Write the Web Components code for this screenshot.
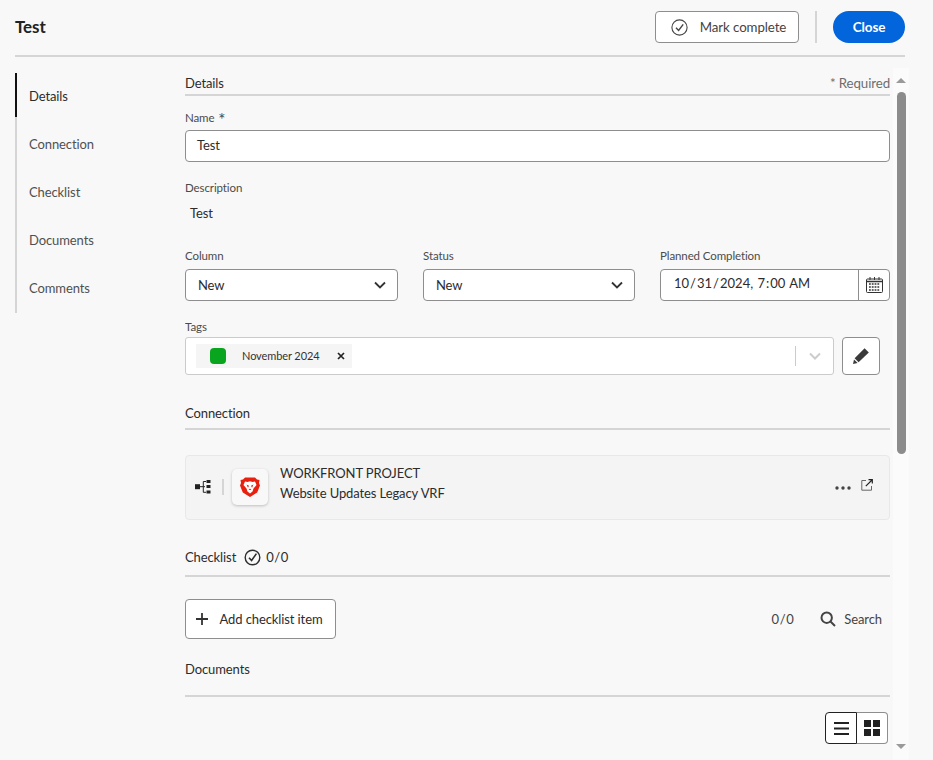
<!DOCTYPE html>
<html lang="en">
<head>
<meta charset="utf-8">
<title>Test</title>
<style>
    html, body { margin: 0; height: 760px; overflow: hidden; background: #f8f8f8; }
    body { font: 13px/16px Lato, "Noto Sans", sans-serif; letter-spacing: -.1px; color: #2c2c2c; }
</style>
</head>
<body>
<wf-panel>
    <wf-header slot="header" title="Test"></wf-header>
    <wf-sidenav slot="nav" active="Details" items="Details,Connection,Checklist,Documents,Comments"></wf-sidenav>

    <wf-section style="height:21px">
        <span>Details</span>
        <span slot="end" style="color:#6e6e6e;font-size:13.3px">* Required</span>
    </wf-section>
    <wf-field label="Name" required style="margin-top:15px">
        <wf-input value="Test"></wf-input>
    </wf-field>
    <wf-field label="Description" style="margin-top:19px">
        <div style="padding:1px 5px 0;height:24px;line-height:24px;box-sizing:content-box">Test</div>
    </wf-field>
    <wf-row style="margin-top:24px;--label-gap:6px">
        <wf-field label="Column"><wf-select value="New"></wf-select></wf-field>
        <wf-field label="Status"><wf-select value="New"></wf-select></wf-field>
        <wf-field label="Planned Completion"><wf-date value="10 / 31 / 2024,&#8197; 7 : 00&#8197; AM"></wf-date></wf-field>
    </wf-row>
    <wf-field label="Tags" style="margin-top:19px;--label-gap:3px">
        <wf-tags tag="November 2024"></wf-tags>
    </wf-field>
    <wf-section style="margin-top:30px;height:25px">
        <span>Connection</span>
    </wf-section>
    <wf-connection style="margin-top:25px" kind="WORKFRONT PROJECT" name="Website Updates Legacy VRF"></wf-connection>
    <wf-section style="margin-top:19px;height:38px">
        <span style="display:inline-flex;align-items:center;gap:8px">Checklist
            <svg width="17" height="17" viewBox="0 0 17 17" fill="none" stroke="#2c2c2c" stroke-width="1.4"><circle cx="8.5" cy="8.5" r="7.3"/><path d="M5 8.7l2.6 2.8L12.4 4.6" stroke-width="1.6"/></svg>
            <span style="margin-left:-3px;letter-spacing:.6px">0/0</span></span>
    </wf-section>
    <wf-toolbar style="margin-top:22px"></wf-toolbar>
    <wf-section style="margin-top:22px;height:36px">
        <span>Documents</span>
    </wf-section>
    <wf-viewtoggle style="margin-top:15px"></wf-viewtoggle>

    <wf-scrollbar slot="scroll"></wf-scrollbar>
</wf-panel>

<script>
// shared button box used by the small outlined buttons
const outlined = `
    display: inline-flex;
    align-items: center;
    justify-content: center;
    box-sizing: border-box;
    border: 1px solid #8e8e8e;
    border-radius: 4px;
    background: #fff;
`;

class WfPanel extends HTMLElement {
    constructor() {
        super();
        this.attachShadow({mode: 'open'}).innerHTML = `
            <style>
                :host { display: block; height: 760px; }
                .main { display: flex; padding-left: 15px; }
                .nav { width: 170px; flex: none; padding-top: 16px; }
                .content { width: 705px; flex: none; padding-top: 18px; box-sizing: border-box; height: 703px; overflow: hidden; }
                .scroll { margin-left: 3px; }
            </style>
            <slot name="header"></slot>
            <div class="main">
                <div class="nav"><slot name="nav"></slot></div>
                <div class="content"><slot></slot></div>
                <div class="scroll"><slot name="scroll"></slot></div>
            </div>`;
    }
}

class WfHeader extends HTMLElement {
    constructor() {
        super();
        this.attachShadow({mode: 'open'}).innerHTML = `
            <style>
                :host { display: flex; align-items: center; box-sizing: border-box; height: 57px; width: 890px; margin-left: 15px; border-bottom: 2px solid #d5d5d5; padding-bottom: 1px; }
                h1 { margin: 0; flex: 1; font-size: 17px; font-weight: 700; color: #222; }
                .mark { ${outlined} width: 144px; height: 32px; gap: 12px; color: #444; padding-left: 3px; font-size: 13.3px; }
                .sep { width: 2px; height: 32px; background: #d5d5d5; margin: 0 16px; }
                .close { display: flex; align-items: center; justify-content: center; width: 72px; height: 32px; border-radius: 16px; background: #0265dc; color: #fff; font-weight: 700; font-size: 13.5px; }
                svg { display: block; }
            </style>
            <h1></h1>
            <div class="mark">
                <svg width="17" height="17" viewBox="0 0 17 17" fill="none" stroke="#444" stroke-width="1.1"><circle cx="8.5" cy="8.5" r="7.6"/><path d="M5 8.8l2.6 2.7 4.6-6.2" stroke-width="1.4"/></svg>
                <span>Mark complete</span>
            </div>
            <div class="sep"></div>
            <div class="close">Close</div>`;
        this.shadowRoot.querySelector('h1').textContent = this.getAttribute('title');
    }
}

class WfSidenav extends HTMLElement {
    constructor() {
        super();
        const active = this.getAttribute('active');
        const items = this.getAttribute('items').split(',').map(name =>
            `<div class="item ${name === active ? 'on' : ''}">${name}</div>`).join('');
        this.attachShadow({mode: 'open'}).innerHTML = `
            <style>
                :host { display: block; }
                .item { position: relative; height: 48px; line-height: 47px; padding-left: 12px; border-left: 2px solid #d5d5d5; color: #505050; }
                .on { color: #2c2c2c; }
                .on::before { content: ''; position: absolute; left: -2px; top: 0; width: 2px; height: 44px; background: #111; }
            </style>${items}`;
    }
}

class WfSection extends HTMLElement {
    constructor() {
        super();
        this.attachShadow({mode: 'open'}).innerHTML = `
            <style>
                :host { display: flex; justify-content: space-between; box-sizing: border-box; border-bottom: 2px solid #d5d5d5; }
            </style>
            <slot></slot><slot name="end"></slot>`;
    }
}

class WfField extends HTMLElement {
    constructor() {
        super();
        this.attachShadow({mode: 'open'}).innerHTML = `
            <style>
                :host { display: block; }
                label { display: block; height: 14px; line-height: 14px; margin-bottom: var(--label-gap, 5px); font-size: 11.5px; color: #4b4b4b; }
                b { font-weight: 400; font-size: 17px; line-height: 14px; vertical-align: -4px; margin-left: 1px; }
            </style>
            <label></label><slot></slot>`;
        const label = this.shadowRoot.querySelector('label');
        label.textContent = this.getAttribute('label');
        if(this.hasAttribute('required')) {
            label.insertAdjacentHTML('beforeend', ' <b>*</b>');
        }
    }
}

class WfInput extends HTMLElement {
    constructor() {
        super();
        this.attachShadow({mode: 'open'}).innerHTML = `
            <style>
                :host { display: flex; align-items: center; box-sizing: border-box; height: 32px; padding: 0 0 2px 11px; border: 1px solid #8e8e8e; border-radius: 4px; background: #fff; }
            </style><span></span>`;
        this.shadowRoot.querySelector('span').textContent = this.getAttribute('value');
    }
}

class WfRow extends HTMLElement {
    constructor() {
        super();
        this.attachShadow({mode: 'open'}).innerHTML = `
            <style>
                :host { display: grid; grid-template-columns: 213px 212px 230px; column-gap: 25px; }
            </style><slot></slot>`;
    }
}

class WfSelect extends HTMLElement {
    constructor() {
        super();
        this.attachShadow({mode: 'open'}).innerHTML = `
            <style>
                :host { display: flex; align-items: center; justify-content: space-between; box-sizing: border-box; height: 32px; padding: 0 11px 0 12px; border: 1px solid #8e8e8e; border-radius: 4px; background: #fff; }
                svg { display: block; }
            </style>
            <span></span>
            <svg width="12" height="8" viewBox="0 0 12 8" fill="none" stroke="#333" stroke-width="1.8"><path d="M1 1.5l5 5 5-5"/></svg>`;
        this.shadowRoot.querySelector('span').textContent = this.getAttribute('value');
    }
}

class WfDate extends HTMLElement {
    constructor() {
        super();
        this.attachShadow({mode: 'open'}).innerHTML = `
            <style>
                :host { display: flex; box-sizing: border-box; height: 32px; border: 1px solid #8e8e8e; border-radius: 4px; background: #fff; }
                .val { flex: 1; line-height: 26px; padding-left: 13px; white-space: pre; color: #2c2c2c; word-spacing: -2.3px; letter-spacing: 0; }
                .cal { width: 30px; display: flex; align-items: center; justify-content: center; border-left: 1px solid #8e8e8e; }
            </style>
            <div class="val"></div>
            <div class="cal">
                <svg width="17" height="16" viewBox="0 0 17 16" fill="none" stroke="#333"><rect x=".5" y="2" width="16" height="13.5" rx="1"/><path d="M.5 4.5h16" stroke-width="1.5"/><path d="M4 0v3M8.5 0v3M13 0v3"/><path d="M3 7h11M3 10h11M3 13h11" stroke-width="1.6" stroke-dasharray="1.8 1"/></svg>
            </div>`;
        this.shadowRoot.querySelector('.val').textContent = this.getAttribute('value');
    }
}

class WfTags extends HTMLElement {
    constructor() {
        super();
        this.attachShadow({mode: 'open'}).innerHTML = `
            <style>
                :host { display: flex; gap: 8px; width: 695px; }
                .box { flex: none; width: 649px; height: 38px; box-sizing: border-box; display: flex; align-items: center; padding-left: 10px; border: 1px solid #cbcbcb; border-radius: 3px; background: #fff; }
                .tag { display: flex; align-items: center; height: 24px; width: 156px; box-sizing: border-box; padding-left: 14px; background: #f5f5f5; font-size: 11px; color: #333; }
                .dot { width: 16px; height: 16px; border-radius: 4px; background: #0aa51f; margin-right: 16px; }
                .tag span { width: 80px; white-space: nowrap; }
                .x { margin-left: 15px; display: block; }
                .spacer { flex: 1; }
                .ind { width: 37px; height: 20px; border-left: 1px solid #cbcbcb; display: flex; align-items: center; justify-content: center; }
                .edit { ${outlined} width: 38px; height: 38px; }
            </style>
            <div class="box">
                <div class="tag"><div class="dot"></div><span></span>
                    <svg class="x" width="8" height="8" viewBox="0 0 8 8" stroke="#222" stroke-width="1.7"><path d="M1 1l6 6M7 1L1 7"/></svg>
                </div>
                <div class="spacer"></div>
                <div class="ind"><svg width="12" height="8" viewBox="0 0 12 8" fill="none" stroke="#ccc" stroke-width="2"><path d="M1 1.5l5 5 5-5"/></svg></div>
            </div>
            <div class="edit">
                <svg width="16" height="16" viewBox="0 0 16 16" fill="#3a3a3a"><path d="M11.6 .2l4.200 4.200L5.600 14.200 1.600 10.200z"/><path d="M1 11.400l3.600 3.600-4.600 1z"/></svg>
            </div>`;
        this.shadowRoot.querySelector('.tag span').textContent = this.getAttribute('tag');
    }
}

class WfConnection extends HTMLElement {
    constructor() {
        super();
        this.attachShadow({mode: 'open'}).innerHTML = `
            <style>
                :host { display: flex; align-items: center; box-sizing: border-box; height: 65px; padding: 0 16px 2px 9px; border: 1px solid #e8e8e8; border-radius: 4px; background: #f4f4f4; }
                .hier { display: block; margin-right: 10px; }
                .bar { width: 2px; height: 16px; background: #d5d5d5; margin-right: 8px; }
                .logo { width: 36px; height: 36px; border-radius: 5px; background: #f8f8f8; box-shadow: 0 1px 3px rgba(0,0,0,.22); display: flex; align-items: center; justify-content: center; margin-right: 12px; }
                .txt { flex: 1; line-height: 20px; color: #2c2c2c; padding-bottom: 8px; }
                .more { display: block; margin: 2px 10px 0 0; }
                .open { display: block; margin-top: -4px; }
            </style>
            <svg class="hier" width="17" height="16" viewBox="0 0 17 16" fill="#222"><rect x="0" y="5.200" width="5" height="5"/><path d="M5 7.700h5M8.300 2.500v10.800M8.300 2.500H11M8.300 13.300H11" fill="none" stroke="#222"/><rect x="11.500" y="1" width="4" height="3"/><rect x="11.500" y="6" width="4" height="3"/><rect x="11.500" y="11.500" width="4" height="3"/></svg>
            <div class="bar"></div>
            <div class="logo">
                <svg width="20" height="20" viewBox="0 0 20 20"><path d="M5 .5h10l2 2 2.500.5-.5 3 1 2.500-2.800 7L10 20l-7.200-4.500L0 8.500 1 6 .5 3 3 2.500z" fill="#e8200e"/><path d="M5 4.500l2.500.5L10 4.200l2.500.8L15 4.500l1.500 3.500-3 3.500-1 3L10 16.500l-2.500-2-1-3-3-3.500z" fill="#fff"/><path d="M6.500 7.500l2.500 1.200-1 2zM13.500 7.500L11 8.700l1 2zM8.500 13h3L10 11.500z" fill="#e8200e"/></svg>
            </div>
            <div class="txt"><div></div><div></div></div>
            <svg class="more" width="16" height="4" viewBox="0 0 16 4" fill="#444"><circle cx="2" cy="2" r="1.700"/><circle cx="8" cy="2" r="1.700"/><circle cx="14" cy="2" r="1.700"/></svg>
            <svg class="open" width="12" height="12" viewBox="0 0 12 12" fill="none" stroke="#666"><path d="M5 1.500H.8v9.700h9.700V7"/><path d="M4.800 7.200L11 1M7.500.7h3.800v3.800" stroke="#222" stroke-width="1.200"/></svg>`;
        const lines = this.shadowRoot.querySelectorAll('.txt div');
        lines[0].textContent = this.getAttribute('kind');
        lines[1].textContent = this.getAttribute('name');
    }
}

class WfToolbar extends HTMLElement {
    constructor() {
        super();
        this.attachShadow({mode: 'open'}).innerHTML = `
            <style>
                :host { display: flex; align-items: center; height: 40px; padding-right: 8px; }
                .add { ${outlined} width: 151px; height: 40px; gap: 11px; color: #2c2c2c; padding-right: 4px; }
                .count { margin-left: auto; letter-spacing: .6px; margin-right: 26px; color: #444; }
                .search { display: flex; align-items: center; gap: 8px; color: #444; }
            </style>
            <div class="add">
                <svg width="14" height="14" viewBox="0 0 14 14" stroke="#333" stroke-width="1.800"><path d="M7 1v12M1 7h12"/></svg>
                <span>Add checklist item</span>
            </div>
            <span class="count">0/0</span>
            <div class="search">
                <svg width="16" height="16" viewBox="0 0 16 16" fill="none" stroke="#444" stroke-width="2"><circle cx="6.700" cy="6.700" r="5.200"/><path d="M10.500 10.500L15 15"/></svg>
                <span>Search</span>
            </div>`;
    }
}

class WfViewtoggle extends HTMLElement {
    constructor() {
        super();
        this.attachShadow({mode: 'open'}).innerHTML = `
            <style>
                :host { display: flex; justify-content: flex-end; padding-right: 2px; }
                .btn { display: flex; align-items: center; justify-content: center; box-sizing: border-box; width: 31px; height: 32px; background: #fff; }
                .list { width: 32px; border: 1px solid #222; border-radius: 4px 0 0 4px; }
                .grid { border: 1px solid #8e8e8e; border-left: 0; border-radius: 0 4px 4px 0; }
            </style>
            <div class="btn list"><svg width="15" height="13" viewBox="0 0 15 13" fill="#222"><rect width="15" height="2"/><rect y="5.500" width="15" height="2"/><rect y="11" width="15" height="2"/></svg></div>
            <div class="btn grid"><svg width="16" height="16" viewBox="0 0 16 16" fill="#222"><rect width="7" height="7"/><rect x="9" width="7" height="7"/><rect y="9" width="7" height="7"/><rect x="9" y="9" width="7" height="7"/></svg></div>`;
    }
}

class WfScrollbar extends HTMLElement {
    constructor() {
        super();
        this.attachShadow({mode: 'open'}).innerHTML = `
            <style>
                :host { display: flex; flex-direction: column; align-items: center; width: 16px; height: 692px; margin-top: 11px; background: #fbfbfb; box-sizing: border-box; padding-top: 10px; }
                .thumb { width: 9px; height: 362px; margin-top: 9px; border-radius: 5px; background: #8c8c8c; }
                .down { margin-top: auto; margin-bottom: 11px; }
                svg { display: block; }
            </style>
            <svg width="10" height="5" viewBox="0 0 10 5" fill="#9a9a9a"><path d="M5 0l5 5H0z"/></svg>
            <div class="thumb"></div>
            <svg class="down" width="10" height="5" viewBox="0 0 10 5" fill="#9a9a9a"><path d="M5 5L0 0h10z"/></svg>`;
    }
}

window.customElements.define('wf-panel', WfPanel);
window.customElements.define('wf-header', WfHeader);
window.customElements.define('wf-sidenav', WfSidenav);
window.customElements.define('wf-section', WfSection);
window.customElements.define('wf-field', WfField);
window.customElements.define('wf-input', WfInput);
window.customElements.define('wf-row', WfRow);
window.customElements.define('wf-select', WfSelect);
window.customElements.define('wf-date', WfDate);
window.customElements.define('wf-tags', WfTags);
window.customElements.define('wf-connection', WfConnection);
window.customElements.define('wf-toolbar', WfToolbar);
window.customElements.define('wf-viewtoggle', WfViewtoggle);
window.customElements.define('wf-scrollbar', WfScrollbar);
</script>
</body>
</html>
